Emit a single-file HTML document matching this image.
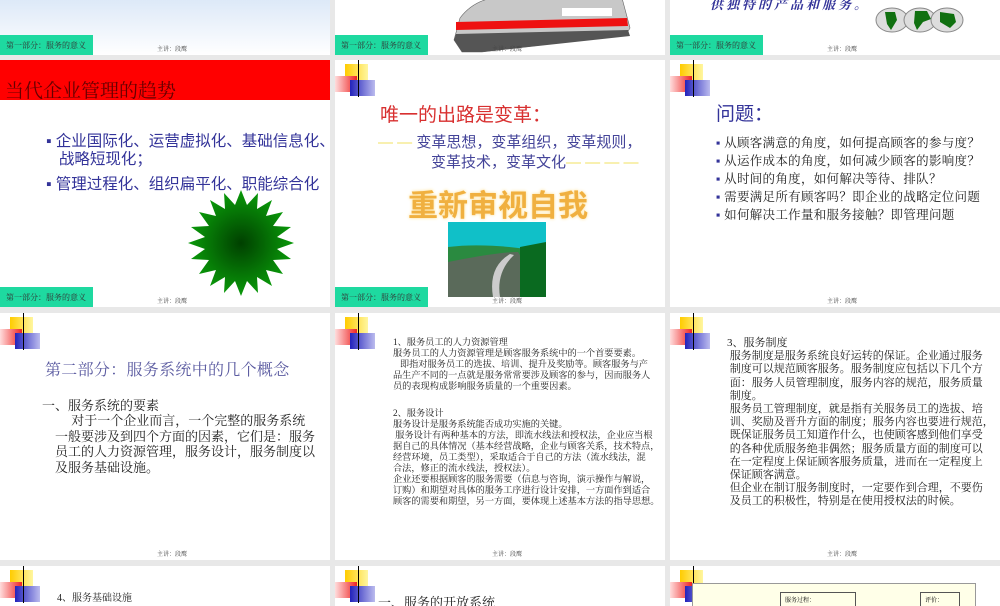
<!DOCTYPE html>
<html><head><meta charset="utf-8"><style>
*{margin:0;padding:0;box-sizing:border-box}
body{width:1000px;height:600px;background:#e8e8e8;position:relative;overflow:hidden;font-family:"Liberation Serif","Noto Serif CJK SC",serif}
.s{position:absolute;background:#fff;overflow:hidden}
.a{position:absolute;white-space:nowrap}
.ft{position:absolute;left:0;width:93px;height:20px;background:#1ed9a0;font-size:8px;color:#333;padding:5px 0 0 6px;white-space:nowrap}
.sp{position:absolute;font-size:6px;color:#444;white-space:nowrap}
.lg{position:absolute;left:0;top:0;width:42px;height:38px}
.lg i{position:absolute;display:block}
.sans{font-family:"Liberation Sans","Noto Sans CJK SC",sans-serif}
</style></head><body>

<!-- row1 -->
<div class="s" style="left:0;top:0;width:330px;height:55px;background:linear-gradient(#dde9f8,#fff)">
 <div class="ft" style="top:35px">第一部分：服务的意义</div><div class="sp" style="left:157px;top:44px">主讲：段鹰</div>
</div>
<div class="s" style="left:335px;top:0;width:330px;height:55px">
 <div class="ft" style="top:35px">第一部分：服务的意义</div>
 <svg class="a" style="left:117px;top:0" width="180" height="55" viewBox="0 0 180 55">
  <path d="M2 40 L8 18 Q20 2 40 -2 L170 -2 L178 28 L174 35 L30 52 L10 52 Z" fill="#c8c8c8" stroke="#666" stroke-width=".6"/>
  <path d="M4 22 L175 18 L176 26 L4 30 Z" fill="#e11"/>
  <path d="M4 34 L176 30 L178 36 L30 52 L10 52 L2 40Z" fill="#555"/>
  <path d="M110 8h50v8h-50z" fill="#fff"/>
 </svg>
 <div class="sp" style="left:157px;top:44px">主讲：段鹰</div>
</div>
<div class="s" style="left:670px;top:0;width:330px;height:55px">
 <div class="a" style="left:40px;top:-6px;font-size:13px;color:#333399;font-weight:bold;font-style:italic;letter-spacing:3px">供独特的产品和服务。</div>
 <svg class="a" style="left:205px;top:7px" width="90" height="27"><ellipse cx="17" cy="13" rx="16" ry="12" fill="#ddd" stroke="#888"/><ellipse cx="45" cy="13" rx="16" ry="12" fill="#ddd" stroke="#888"/><ellipse cx="72" cy="13" rx="16" ry="12" fill="#ddd" stroke="#888"/><path d="M10 5l10 0 2 8-6 10-4-6z M40 4l12 0 4 8-8 3-6 8-3-7z M65 5l14 2 2 8-6 6-10-6z" fill="#107010"/></svg>
 <div class="ft" style="top:35px">第一部分：服务的意义</div><div class="sp" style="left:157px;top:44px">主讲：段鹰</div>
</div>

<!-- row2 -->
<div class="s" style="left:0;top:60px;width:330px;height:247px">
 <div class="a" style="left:0;top:0;width:330px;height:40px;background:#ff0000"></div>
 <div class="a" style="left:5px;top:16px;font-size:19px;color:#600">当代企业管理的趋势</div>
 <div class="a sans" style="left:46px;top:73px;font-size:15.5px;color:#333399;line-height:18px">▪ 企业国际化、运营虚拟化、基础信息化、<br>&nbsp;&nbsp;&nbsp;战略短现化；</div>
 <div class="a sans" style="left:46px;top:112px;font-size:15.5px;color:#333399">▪ 管理过程化、组织扁平化、职能综合化</div>
 <svg class="a" style="left:186px;top:128px" width="110" height="110" viewBox="-55 -55 110 110"><defs><radialGradient id="g"><stop offset="0" stop-color="#004000"/><stop offset="1" stop-color="#0a9a0a"/></radialGradient></defs><polygon fill="url(#g)" points="0,-53 6,-38 17,-50 16,-34 31,-43 25,-27 42,-31 32,-17 50,-16 36,-6 53,0 36,6 50,16 32,17 42,31 25,27 31,43 16,34 17,50 6,38 0,53 -6,38 -17,50 -16,34 -31,43 -25,27 -42,31 -32,17 -50,16 -36,6 -53,0 -36,-6 -50,-16 -32,-17 -42,-31 -25,-27 -31,-43 -16,-34 -17,-50 -6,-38"/></svg>
 <div class="ft" style="top:227px">第一部分：服务的意义</div><div class="sp" style="left:157px;top:236px">主讲：段鹰</div>
</div>
<div class="s" style="left:335px;top:60px;width:330px;height:247px">
 <div class="lg"><i style="left:10px;top:4px;width:23px;height:18px;background:linear-gradient(90deg,#fc0,#fff6a0)"></i><i style="left:0;top:16px;width:22px;height:16px;background:linear-gradient(90deg,#fdd,#e22)"></i><i style="left:15px;top:20px;width:25px;height:16px;background:linear-gradient(90deg,#22b,#bbe)"></i><i style="left:23px;top:0;width:1px;height:37px;background:#000"></i></div>
 <div class="a sans" style="left:45px;top:40px;font-size:19px;color:#d83030">唯一的出路是变革：</div>
 <div class="a sans" style="left:43px;top:71px;font-size:15px;color:#444499"><span style="color:#f0e060">— — </span>变革思想，变革组织，变革规则，</div>
 <div class="a sans" style="left:96px;top:91px;font-size:15px;color:#444499">变革技术，变革文化<span style="color:#f0e060">— — — —</span></div>
 <div class="a sans" style="left:73px;top:121px;font-size:30px;font-weight:bold;color:#f0b040;text-shadow:0 0 3px #fd8">重新审视自我</div>
 <svg class="a" style="left:113px;top:162px" width="98" height="75"><rect width="98" height="75" fill="#10c0c8"/><path d="M0 25 Q40 20 98 30 L98 75 L0 75Z" fill="#2a8a40"/><path d="M0 40 Q50 30 70 30 L98 75 L0 75Z" fill="#5a6a5a"/><path d="M62 32 Q40 45 45 75 L52 75 Q48 50 66 33Z" fill="#ccc"/><path d="M72 25 L98 20 L98 75 L72 75Z" fill="#0a6a20"/></svg>
 <div class="ft" style="top:227px">第一部分：服务的意义</div><div class="sp" style="left:157px;top:236px">主讲：段鹰</div>
</div>
<div class="s" style="left:670px;top:60px;width:330px;height:247px">
 <div class="lg"><i style="left:10px;top:4px;width:23px;height:18px;background:linear-gradient(90deg,#fc0,#fff6a0)"></i><i style="left:0;top:16px;width:22px;height:16px;background:linear-gradient(90deg,#fdd,#e22)"></i><i style="left:15px;top:20px;width:25px;height:16px;background:linear-gradient(90deg,#22b,#bbe)"></i><i style="left:23px;top:0;width:1px;height:37px;background:#000"></i></div>
 <div class="a sans" style="left:46px;top:39px;font-size:19px;color:#333399">问题：</div>
 <div class="a" style="left:46px;top:74px;font-size:12.5px;color:#222;line-height:18px;letter-spacing:.3px">
 <span style="color:#333399">▪</span> 从顾客满意的角度，如何提高顾客的参与度？<br>
 <span style="color:#333399">▪</span> 从运作成本的角度，如何减少顾客的影响度？<br>
 <span style="color:#333399">▪</span> 从时间的角度，如何解决等待、排队？<br>
 <span style="color:#333399">▪</span> 需要满足所有顾客吗？即企业的战略定位问题<br>
 <span style="color:#333399">▪</span> 如何解决工作量和服务接触？即管理问题</div>
 <div class="sp" style="left:157px;top:236px">主讲：段鹰</div>
</div>

<!-- row3 -->
<div class="s" style="left:0;top:313px;width:330px;height:247px">
 <div class="lg"><i style="left:10px;top:4px;width:23px;height:18px;background:linear-gradient(90deg,#fc0,#fff6a0)"></i><i style="left:0;top:16px;width:22px;height:16px;background:linear-gradient(90deg,#fdd,#e22)"></i><i style="left:15px;top:20px;width:25px;height:16px;background:linear-gradient(90deg,#22b,#bbe)"></i><i style="left:23px;top:0;width:1px;height:37px;background:#000"></i></div>
 <div class="a" style="left:45px;top:44px;font-size:16px;color:#5a5aa0;letter-spacing:.3px">第二部分：服务系统中的几个概念</div>
 <div class="a" style="left:42px;top:82px;font-size:13px;color:#222">一、服务系统的要素</div>
 <div class="a" style="left:55px;top:100px;font-size:13px;color:#222;line-height:15.5px">&nbsp;&nbsp;&nbsp;&nbsp;&nbsp;对于一个企业而言，一个完整的服务系统<br>一般要涉及到四个方面的因素，它们是：服务<br>员工的人力资源管理，服务设计，服务制度以<br>及服务基础设施。</div>
 <div class="sp" style="left:157px;top:236px">主讲：段鹰</div>
</div>
<div class="s" style="left:335px;top:313px;width:330px;height:247px">
 <div class="lg"><i style="left:10px;top:4px;width:23px;height:18px;background:linear-gradient(90deg,#fc0,#fff6a0)"></i><i style="left:0;top:16px;width:22px;height:16px;background:linear-gradient(90deg,#fdd,#e22)"></i><i style="left:15px;top:20px;width:25px;height:16px;background:linear-gradient(90deg,#22b,#bbe)"></i><i style="left:23px;top:0;width:1px;height:37px;background:#000"></i></div>
 <div class="a" style="left:58px;top:24px;font-size:9.2px;color:#222;line-height:11px">1、服务员工的人力资源管理<br>服务员工的人力资源管理是顾客服务系统中的一个首要要素。<br>&nbsp;&nbsp;&nbsp;即指对服务员工的选拔、培训、提升及奖励等。顾客服务与产<br>品生产不同的一点就是服务常常要涉及顾客的参与，因而服务人<br>员的表现构成影响服务质量的一个重要因素。</div>
 <div class="a" style="left:58px;top:95px;font-size:9.2px;color:#222;line-height:11px">2、服务设计<br>服务设计是服务系统能否成功实施的关键。<br>&nbsp;服务设计有两种基本的方法，即流水线法和授权法，企业应当根<br>据自己的具体情况（基本经营战略，企业与顾客关系，技术特点，<br>经营环境，员工类型），采取适合于自己的方法（流水线法，混<br>合法，修正的流水线法，授权法）。<br>企业还要根据顾客的服务需要（信息与咨询，演示操作与解说，<br>订购）和期望对具体的服务工序进行设计安排，一方面作到适合<br>顾客的需要和期望，另一方面，要体现上述基本方法的指导思想。</div>
 <div class="sp" style="left:157px;top:236px">主讲：段鹰</div>
</div>
<div class="s" style="left:670px;top:313px;width:330px;height:247px">
 <div class="lg"><i style="left:10px;top:4px;width:23px;height:18px;background:linear-gradient(90deg,#fc0,#fff6a0)"></i><i style="left:0;top:16px;width:22px;height:16px;background:linear-gradient(90deg,#fdd,#e22)"></i><i style="left:15px;top:20px;width:25px;height:16px;background:linear-gradient(90deg,#22b,#bbe)"></i><i style="left:23px;top:0;width:1px;height:37px;background:#000"></i></div>
 <div class="a" style="left:57px;top:24px;font-size:11px;color:#222;line-height:13.2px">3、服务制度<br>&nbsp;服务制度是服务系统良好运转的保证。企业通过服务<br>&nbsp;制度可以规范顾客服务。服务制度应包括以下几个方<br>&nbsp;面：服务人员管理制度，服务内容的规范，服务质量<br>&nbsp;制度。<br>&nbsp;服务员工管理制度，就是指有关服务员工的选拔、培<br>&nbsp;训、奖励及晋升方面的制度；服务内容也要进行规范，<br>&nbsp;既保证服务员工知道作什么，也使顾客感到他们享受<br>&nbsp;的各种优质服务绝非偶然；服务质量方面的制度可以<br>&nbsp;在一定程度上保证顾客服务质量，进而在一定程度上<br>&nbsp;保证顾客满意。<br>&nbsp;但企业在制订服务制度时，一定要作到合理，不要伤<br>&nbsp;及员工的积极性，特别是在使用授权法的时候。</div>
 <div class="sp" style="left:157px;top:236px">主讲：段鹰</div>
</div>

<!-- row4 -->
<div class="s" style="left:0;top:566px;width:330px;height:40px">
 <div class="lg"><i style="left:10px;top:4px;width:23px;height:18px;background:linear-gradient(90deg,#fc0,#fff6a0)"></i><i style="left:0;top:16px;width:22px;height:16px;background:linear-gradient(90deg,#fdd,#e22)"></i><i style="left:15px;top:20px;width:25px;height:16px;background:linear-gradient(90deg,#22b,#bbe)"></i><i style="left:23px;top:0;width:1px;height:37px;background:#000"></i></div>
 <div class="a" style="left:57px;top:23px;font-size:10px;color:#222">4、服务基础设施</div>
</div>
<div class="s" style="left:335px;top:566px;width:330px;height:40px">
 <div class="lg"><i style="left:10px;top:4px;width:23px;height:18px;background:linear-gradient(90deg,#fc0,#fff6a0)"></i><i style="left:0;top:16px;width:22px;height:16px;background:linear-gradient(90deg,#fdd,#e22)"></i><i style="left:15px;top:20px;width:25px;height:16px;background:linear-gradient(90deg,#22b,#bbe)"></i><i style="left:23px;top:0;width:1px;height:37px;background:#000"></i></div>
 <div class="a" style="left:43px;top:26px;font-size:13px;color:#222">一、服务的开放系统</div>
</div>
<div class="s" style="left:670px;top:566px;width:330px;height:40px">
 <div class="lg"><i style="left:10px;top:4px;width:23px;height:18px;background:linear-gradient(90deg,#fc0,#fff6a0)"></i><i style="left:0;top:16px;width:22px;height:16px;background:linear-gradient(90deg,#fdd,#e22)"></i><i style="left:15px;top:20px;width:25px;height:16px;background:linear-gradient(90deg,#22b,#bbe)"></i><i style="left:23px;top:0;width:1px;height:37px;background:#000"></i></div>
 <div class="a" style="left:22px;top:17px;width:284px;height:30px;background:#ffffe8;border:1px solid #999"></div>
 <div class="a" style="left:110px;top:26px;width:76px;height:20px;border:1px solid #555;font-size:6px;padding:2px 4px">服务过程：</div>
 <div class="a" style="left:250px;top:26px;width:40px;height:20px;border:1px solid #555;font-size:6px;padding:2px 4px">评价：</div>
</div>
</body></html>
